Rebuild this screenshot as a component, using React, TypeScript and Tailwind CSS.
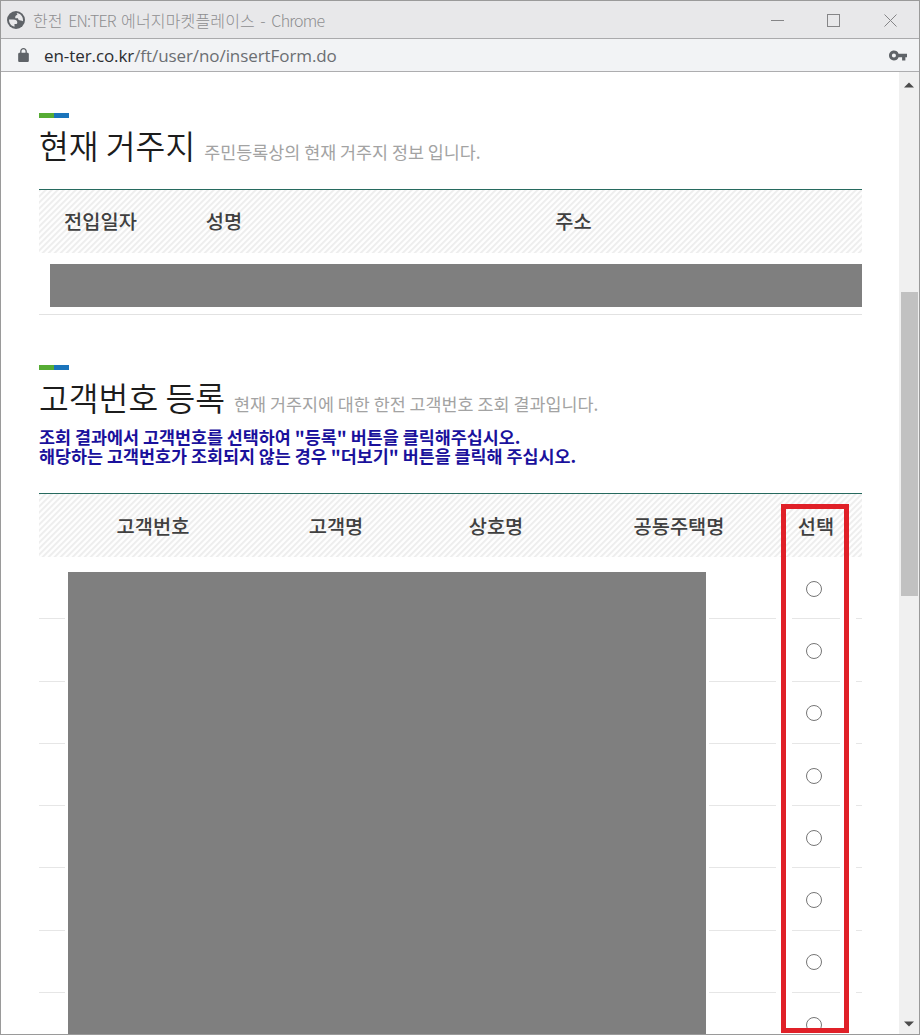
import type { ReactNode } from "react";

const RESIDENCE_COLS = [
  { label: "전입일자", cls: "w-[123px]" },
  { label: "성명",     cls: "w-[124px]" },
  { label: "주소",     cls: "w-[575px]" },
];

const CUSTOMER_COLS = [
  { label: "고객번호",   cls: "w-[228px]" },
  { label: "고객명",     cls: "w-[138px]" },
  { label: "상호명",     cls: "w-[182px]" },
  { label: "공동주택명", cls: "w-[184px]" },
  { label: "선택",       cls: "w-[90px]" },
];

const ROWS = [1, 2, 3, 4, 5, 6, 7, 8];

function GlobeIcon() {
  return (
    <svg viewBox="0 0 18 18" className="w-[18px] h-[18px] flex-shrink-0">
      <circle cx="9" cy="9" r="9" fill="#5f6368" />
      <path
        fill="#e8e8ea"
        d="M2 8.600h4.300c2.700 0 4 1.100 4 3.200 0 .9-.6 1.300-1.600 1.300H7.500v2.700C4.300 15.200 2 12.400 2 8.600z"
      />
      <path
        fill="#e8e8ea"
        d="M9.600 2c3.700.3 6.400 3.200 6.400 7 0 .5 0 .8-.1 1.200-.6-.5-1.300-.8-2.200-.8-1.900 0-2.700-.8-2.700-2.200H8.300c-.3-2.100.3-3.200 2-3.300 0-.7-.2-1.300-.7-1.900z"
      />
    </svg>
  );
}

function TitleBar() {
  return (
    <div className="h-[38px] flex-shrink-0 flex items-center bg-[#e8e8ea] border-b border-[#aaaaac] pl-[6px] pr-[21px]">
      <GlobeIcon />
      <span className="ml-[8px] text-[16px] font-light tracking-[0.150px] [word-spacing:1.800px] text-[#8e8e90] whitespace-nowrap">
        한전 <span className="tracking-[-0.900px]">EN:TER</span> 에너지마켓플레이스 -{" "}
        <span className="tracking-[-0.750px]">Chrome</span>
      </span>
      <svg width="128" height="14" className="ml-auto flex-shrink-0" fill="none" stroke="#858587" strokeWidth="1">
        <path d="M1 7.500H14" />
        <rect x="57.500" y="1.500" width="12" height="12" />
        <path d="M114.500 1.500l12 12M126.500 1.500l-12 12" />
      </svg>
    </div>
  );
}

function AddressBar() {
  return (
    <div className="h-[33px] flex-shrink-0 flex items-center bg-[#f2f3f5] border-b border-[#adadaf] pl-[17px] pr-[12px]">
      <svg viewBox="4 1 16 21" className="w-[11px] h-[14px] flex-shrink-0">
        <path
          fill="#5f6368"
          d="M18 8h-1V6c0-2.760-2.240-5-5-5S7 3.240 7 6v2H6c-1.100 0-2 .9-2 2v10c0 1.100.9 2 2 2h12c1.100 0 2-.9 2-2V10c0-1.100-.9-2-2-2zM9 8V6c0-1.660 1.340-3 3-3s3 1.340 3 3v2z"
        />
      </svg>
      <span className="ml-[15px] pt-[2px] font-['Open_Sans','Noto_Sans_CJK_KR',sans-serif] text-[17px] tracking-[-0.080px] text-[#6b6e72] whitespace-nowrap">
        <span className="text-[#2b2d30]">en-ter.co.kr</span>/ft/user/no/insertForm.do
      </span>
      <svg viewBox="1 6 22 12" className="ml-auto w-[18px] h-[11px] flex-shrink-0">
        <path
          fill="#5f6368"
          d="M12.650 10A5.990 5.990 0 0 0 7 6c-3.310 0-6 2.690-6 6s2.690 6 6 6a5.990 5.990 0 0 0 5.650-4H17v4h4v-4h2v-4H12.650zM7 14.500a2.500 2.500 0 1 1 0-5 2.500 2.500 0 0 1 0 5z"
        />
      </svg>
    </div>
  );
}

function SectionTitle({ title, note }: { title: string; note: string }) {
  return (
    <div>
      <div className="flex h-[5px] w-[30px]">
        <div className="flex-1 bg-[#56ac34]" />
        <div className="flex-1 bg-[#1a74bb]" />
      </div>
      <h2 className="mt-[3px] h-[48px] leading-[48px] whitespace-nowrap text-[32.4px] font-[350] text-[#1c1c1c]">
        {title}
        <span className="ml-[9px] text-[17.400px] font-normal text-[#a3a3a3]">{note}</span>
      </h2>
    </div>
  );
}

function HeaderRow({ cols, leading }: { cols: { label: string; cls: string }[]; leading: string }) {
  return (
    <div className="flex h-[64px] border-t border-[#276a5f] bg-[repeating-linear-gradient(135deg,#eeeeee_0px,#eeeeee_1px,#fefefe_2px,#fefefe_3.300px,#eeeeee_4.243px)]">
      {cols.map((c) => (
        <div key={c.label} className={`${c.cls} ${leading} text-center text-[19.800px] font-medium text-[#404040]`}>
          {c.label}
        </div>
      ))}
    </div>
  );
}

// Row separators stop short of the mask and of the highlight frame
function CustomerRow({ children }: { children: ReactNode }) {
  return (
    <div className="h-[62.300px] flex-shrink-0 flex flex-col">
      <div className="flex-1 flex items-center pl-[767px] pt-[2px]">{children}</div>
      <div className="h-px flex">
        <div className="w-[26px] bg-[#e6e6e6]" />
        <div className="ml-[644px] w-[67px] bg-[#e6e6e6]" />
        <div className="ml-[16px] w-[48px] bg-[#e6e6e6]" />
        <div className="ml-[16px] w-[6px] bg-[#e6e6e6]" />
      </div>
    </div>
  );
}

function Scrollbar() {
  return (
    <div className="w-[20px] flex-shrink-0 flex flex-col items-center bg-[#f0f0f0]">
      <svg width="10" height="6" className="mt-[10px]">
        <path d="M0 5.500L5 0.500L10 5.500z" fill="#4b4b4b" />
      </svg>
      <div className="mt-[204px] h-[304px] w-[17px] bg-[#c1c1c1]" />
      <svg width="10" height="6" className="mt-auto mb-[7px]">
        <path d="M0 0.500L5 5.500L10 0.500z" fill="#4b4b4b" />
      </svg>
    </div>
  );
}

export default function App() {
  return (
    <div className="w-[920px] h-[1035px] flex flex-col overflow-hidden border border-[#9a9a9a] bg-white font-['Noto_Sans_CJK_KR',sans-serif]">
      <TitleBar />
      <AddressBar />

      <div className="flex-1 min-h-0 flex">
        <main className="flex-1 min-w-0 overflow-hidden pl-[38px] pt-[41px]">
          {/* Current residence */}
          <SectionTitle title="현재 거주지" note="주민등록상의 현재 거주지 정보 입니다." />
          <div className="mt-[20px] w-[823px]">
            <HeaderRow cols={RESIDENCE_COLS} leading="leading-[61px]" />
            <div className="h-[62px] border-b border-[#e2e2e2] pt-[11px] pl-[11px]">
              <div className="h-[43px] bg-[#7f7f7f]" />
            </div>
          </div>

          {/* Customer number registration */}
          <div className="mt-[50px]">
            <SectionTitle title="고객번호 등록" note="현재 거주지에 대한 한전 고객번호 조회 결과입니다." />
          </div>
          <div className="mt-[6px] text-[17.400px] font-bold text-[#1a119c] whitespace-nowrap">
            <p className="h-[19px] leading-[19px]">조회 결과에서 고객번호를 선택하여 "등록" 버튼을 클릭해주십시오.</p>
            <p className="h-[19px] leading-[19px]">해당하는 고객번호가 조회되지 않는 경우 "더보기" 버튼을 클릭해 주십시오.</p>
          </div>
          <div className="relative mt-[28px] w-[823px]">
            <HeaderRow cols={CUSTOMER_COLS} leading="leading-[63px]" />
            {ROWS.map((n) => (
              <CustomerRow key={n}>
                <div className="w-[16px] h-[16px] rounded-full border-[1.300px] border-[#767676] bg-white" />
              </CustomerRow>
            ))}
            <div className="absolute left-[29px] top-[79px] w-[638px] h-[480px] bg-[#7f7f7f]" />
            <div className="absolute left-[742px] top-[11px] w-[68px] h-[529px] border-[5px] border-[#e02028]" />
          </div>
        </main>
        <Scrollbar />
      </div>
    </div>
  );
}
